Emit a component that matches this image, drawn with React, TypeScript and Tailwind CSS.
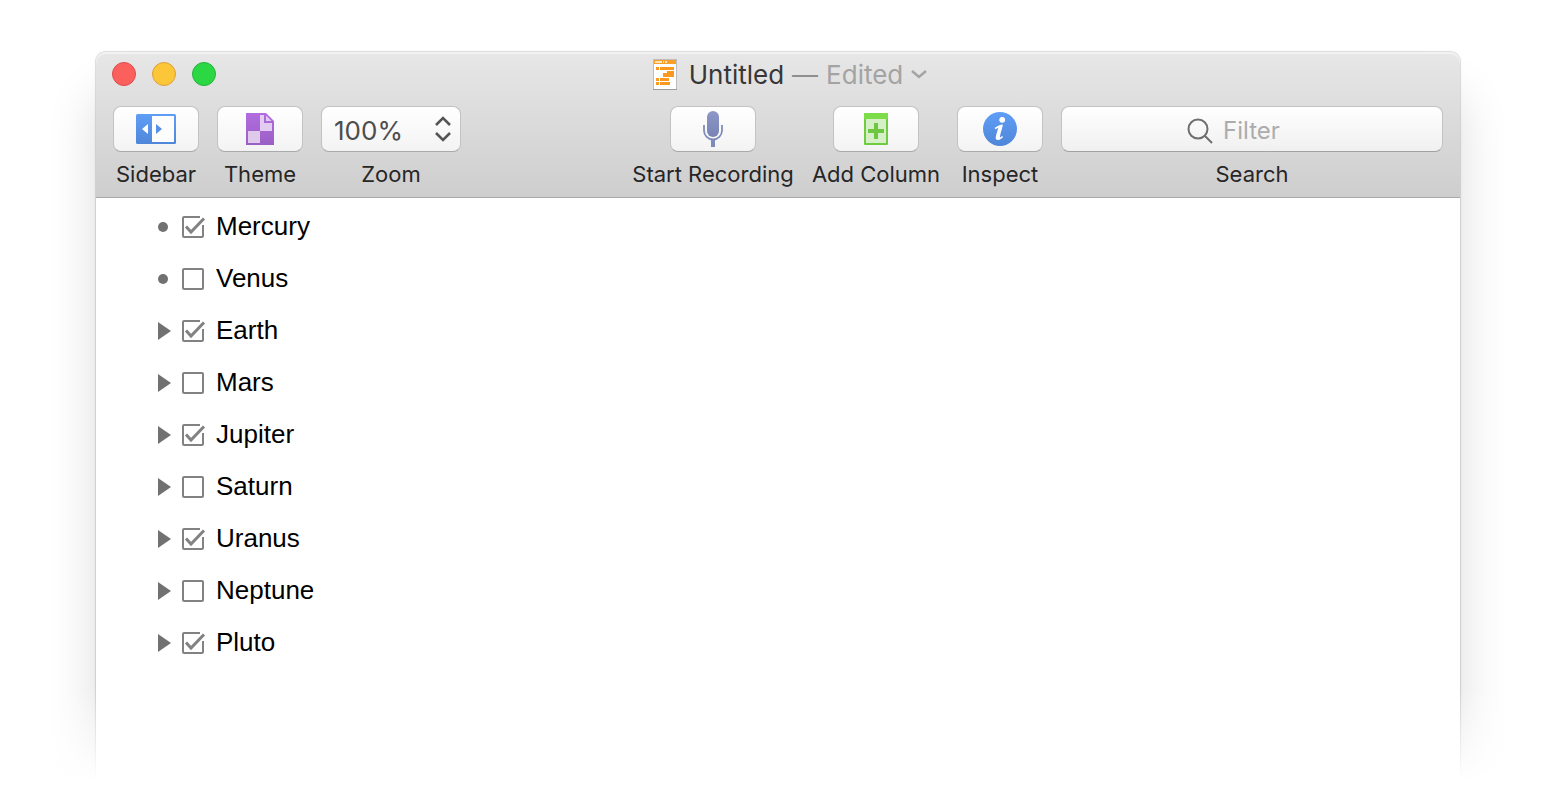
import { useState } from "react";
import type { ReactNode } from "react";

const planets = [
  { name: "Mercury", done: true, leaf: true },
  { name: "Venus", done: false, leaf: true },
  { name: "Earth", done: true, leaf: false },
  { name: "Mars", done: false, leaf: false },
  { name: "Jupiter", done: true, leaf: false },
  { name: "Saturn", done: false, leaf: false },
  { name: "Uranus", done: true, leaf: false },
  { name: "Neptune", done: false, leaf: false },
  { name: "Pluto", done: true, leaf: false },
];

function SidebarIcon() {
  return (
    <svg width="40" height="30" viewBox="0 0 40 30">
      <defs>
        <linearGradient id="blue" x1="0" y1="0" x2="0" y2="1">
          <stop offset="0" stopColor="#5f9ef6" />
          <stop offset="1" stopColor="#4f86d9" />
        </linearGradient>
      </defs>
      <rect width="40" height="30" rx="1.5" fill="url(#blue)" />
      <rect x="16" y="2" width="22" height="26" fill="#fdfdfd" />
      <path d="M12 10v10l-6-5z" fill="#fff" />
      <path d="M20 10v10l6-5z" fill="#5790e6" />
    </svg>
  );
}

function ThemeIcon() {
  return (
    <svg width="28" height="32" viewBox="0 0 28 32">
      <defs>
        <linearGradient id="purple" x1="0" y1="0" x2="0" y2="1">
          <stop offset="0" stopColor="#b26ce0" />
          <stop offset="1" stopColor="#9a5fc4" />
        </linearGradient>
      </defs>
      <path d="M0 0h20l8 8v24H0z" fill="url(#purple)" />
      <path d="M14 2h4v8h8v8H14z" fill="#e2cdf0" />
      <path d="M20 2.500l5.500 5.500H20z" fill="#e2cdf0" />
      <path d="M2 18h12v12H2z" fill="#dfcaec" />
    </svg>
  );
}

function MicIcon() {
  return (
    <svg width="20" height="36" viewBox="0 0 20 36">
      <defs>
        <linearGradient id="mic" x1="0" y1="0" x2="0" y2="1">
          <stop offset="0" stopColor="#8d98c8" />
          <stop offset="1" stopColor="#7983b3" />
        </linearGradient>
      </defs>
      <rect x="4" y="0" width="12" height="26" rx="6" fill="url(#mic)" />
      <path
        d="M1 14v5.500a9 9 0 0 0 18 0V14"
        fill="none"
        stroke="#7f8aba"
        strokeWidth="1.800"
      />
      <path d="M8 28.500h4V36H8z" fill="#7f8aba" />
    </svg>
  );
}

function ColumnIcon() {
  return (
    <svg width="24" height="32" viewBox="0 0 24 32">
      <rect width="24" height="32" rx="1" fill="#6fcb3f" />
      <path d="M1 0h22l1 1v5H0V1z" fill="#7cdd48" />
      <rect x="2" y="6" width="20" height="24" fill="#d5efc6" />
      <path d="M10 10h4v6h6v4h-6v6h-4v-6H4v-4h6z" fill="#6fc741" />
    </svg>
  );
}

function InfoIcon() {
  return (
    <svg width="34" height="34" viewBox="0 0 34 34">
      <circle cx="17" cy="17" r="17" fill="url(#blue)" />
      <circle cx="19.200" cy="7.800" r="2.900" fill="#fff" />
      <path
        d="M12 16.500c2.500-1.200 4.500-2.600 6.200-2.900-.6 3.900-2.600 8.600-2.900 12.300 0 1.800 2.200 1 4.200-1.400"
        fill="none"
        stroke="#fff"
        strokeWidth="1.600"
      />
      <path
        d="M19.900 12.600c-.7 4.300-2.600 8.600-3 12.600 0 1.500-.6 2.700-2.200 2.700-1.700 0-2.200-1.300-1.900-3.200.6-3.400 2.100-6.400 2.600-9.900z"
        fill="#fff"
      />
    </svg>
  );
}

function DocumentIcon() {
  return (
    <svg width="24" height="31" viewBox="0 0 24 31">
      <rect x="0.500" y="0.500" width="23" height="30" fill="#fff" stroke="#bdbdbd" />
      <path d="M0 30.500h24" stroke="#9c9c9c" />
      <path d="M1 1h22v4H1z" fill="#f9a02b" />
      <path d="M2 3h7M10 3h1M12 3h2" stroke="#fde3bd" strokeWidth="2" />
      <g fill="#fb9820">
        <path d="M3 8h3v3H3zM7 8h14v3H7z" />
        <path d="M14 12h7v6H10v-4h4z" />
        <path d="M3 19h3v3H3zM7 19h9v3H7z" />
        <path d="M3 23h3v3H3zM7 23h10v3H7z" />
      </g>
    </svg>
  );
}

function ToolbarButton({
  label,
  width,
  children,
}: {
  label: string;
  width: string;
  children: ReactNode;
}) {
  return (
    <button className={`flex shrink-0 flex-col items-center gap-2 ${width}`}>
      <span className="flex h-[46px] w-[86px] items-center justify-center rounded-lg border border-[#c3c3c3] border-b-[#a9a9a9] bg-linear-to-b from-white to-[#f3f3f3]">
        {children}
      </span>
      <span className="text-[22px] leading-7 whitespace-nowrap">{label}</span>
    </button>
  );
}

function OutlineRow({
  name,
  done,
  leaf,
}: {
  name: string;
  done: boolean;
  leaf: boolean;
}) {
  const [checked, setChecked] = useState(done);

  return (
    <li className="flex h-[52px] items-center">
      {leaf ? (
        <span className="w-6">
          <span className="block size-[10px] rounded-full bg-[#717171]" />
        </span>
      ) : (
        <button aria-label={`Expand ${name}`} className="w-6">
          <svg width="14" height="18" viewBox="0 0 14 18">
            <path d="M0 0l13 9-13 9z" fill="#717171" />
          </svg>
        </button>
      )}
      <label className="flex items-center gap-3">
        <span className="grid">
          <input
            type="checkbox"
            checked={checked}
            onChange={() => setChecked(!checked)}
            className="col-start-1 row-start-1 size-[22px] appearance-none rounded-xs border-2 border-[#828282] checked:border-transparent"
          />
          {checked && (
            <svg
              className="pointer-events-none col-start-1 row-start-1 overflow-visible"
              width="22"
              height="22"
              viewBox="0 0 22 22"
              fill="none"
              stroke="#828282"
            >
              <path d="M18 1H2a1 1 0 0 0-1 1v18a1 1 0 0 0 1 1h18a1 1 0 0 0 1-1V9" strokeWidth="2" />
              <path d="M4 10.500l5 5.500L22 2.500" strokeWidth="3" />
            </svg>
          )}
        </span>
        <span className="pb-0.5">{name}</span>
      </label>
    </li>
  );
}

export default function App() {
  return (
    <div className="relative flex min-h-screen flex-col overflow-hidden bg-white px-24 pt-[52px] font-['Inter',sans-serif]">
      <main className="flex flex-1 flex-col rounded-t-[10px] bg-white shadow-[0_0_1px_1px_rgba(0,0,0,0.14),0_44px_50px_rgba(0,0,0,0.14)]">
        <header className="rounded-t-[10px] border-b border-[#a8a8a8] bg-linear-to-b from-[#e8e7e8] to-[#cfcecf] pb-[9px] text-[#262626]">
          {/* Title bar */}
          <div className="grid h-11 grid-cols-[1fr_auto_1fr] items-center rounded-t-[10px] inset-shadow-[0_2px_0_#f2f2f2]">
            <div className="flex gap-4 pl-4">
              <button aria-label="Close" className="size-6 rounded-full border border-[#e0484a] bg-[#fc605c]" />
              <button aria-label="Minimize" className="size-6 rounded-full border border-[#dea03a] bg-[#fbc637]" />
              <button aria-label="Full screen" className="size-6 rounded-full border border-[#25b13a] bg-[#2bd843]" />
            </div>
            <div className="flex items-center">
              <DocumentIcon />
              <h1 className="ml-3 flex gap-2 pt-0.5 text-[26px] leading-8 text-[#373737]">
                Untitled <span className="text-[#8e8e8e]">—</span>
                <span className="text-[#a3a3a3]">Edited</span>
              </h1>
            </div>
            <button aria-label="Document options" className="ml-2 w-4">
              <svg width="16" height="10" viewBox="0 0 16 10" fill="none" stroke="#a3a3a3" strokeWidth="2.400">
                <path d="M1 2l7 6 7-6" />
              </svg>
            </button>
          </div>

          {/* Toolbar */}
          <div className="flex gap-[18px] px-[17px] pt-[10px]">
            <ToolbarButton label="Sidebar" width="w-[86px]">
              <SidebarIcon />
            </ToolbarButton>
            <ToolbarButton label="Theme" width="w-[86px]">
              <ThemeIcon />
            </ToolbarButton>

            <div className="mr-auto flex w-[140px] shrink-0 flex-col items-center gap-2">
              <div className="grid w-full items-center">
                <select
                  id="zoom"
                  defaultValue="100%"
                  className="col-start-1 row-start-1 h-[46px] w-full appearance-none rounded-lg border border-[#c3c3c3] border-b-[#a9a9a9] bg-linear-to-b from-white to-[#f3f3f3] pt-0.5 pl-3 text-[26px] text-[#4d4d4d]"
                >
                  <option>50%</option>
                  <option>100%</option>
                  <option>200%</option>
                </select>
                <svg
                  className="pointer-events-none col-start-1 row-start-1 mr-[10px] justify-self-end"
                  width="16"
                  height="26"
                  viewBox="0 0 16 26"
                  fill="none"
                  stroke="#555"
                  strokeWidth="2.600"
                >
                  <path d="M1 9l7-7 7 7M1 17l7 7 7-7" />
                </svg>
              </div>
              <label htmlFor="zoom" className="text-[22px] leading-7">
                Zoom
              </label>
            </div>

            <ToolbarButton label="Start Recording" width="w-[164px]">
              <MicIcon />
            </ToolbarButton>
            <ToolbarButton label="Add Column" width="w-[126px]">
              <ColumnIcon />
            </ToolbarButton>
            <ToolbarButton label="Inspect" width="w-[86px]">
              <InfoIcon />
            </ToolbarButton>

            <div className="flex w-[382px] flex-col items-center gap-2">
              <div className="flex h-[46px] w-full items-center justify-center gap-[10px] rounded-lg border border-[#c3c3c3] border-b-[#a0a3a0] bg-linear-to-b from-white to-[#f0f0f0] pt-1">
                <svg width="26" height="26" viewBox="0 0 26 26" fill="none" stroke="#6e6e6e" strokeWidth="2">
                  <circle cx="11" cy="11" r="9.500" />
                  <path d="M17.500 17.500l7.500 7.500" />
                </svg>
                <input
                  id="search"
                  type="text"
                  placeholder="Filter"
                  className="w-[94px] bg-transparent text-[24px] outline-none placeholder:text-[#acacac]"
                />
              </div>
              <label htmlFor="search" className="text-[22px] leading-7">
                Search
              </label>
            </div>
          </div>
        </header>

        <ul className="pt-[3px] pl-[62px] font-['Liberation_Sans',Arial,sans-serif] text-[26px] leading-8 text-black">
          {planets.map((planet) => (
            <OutlineRow key={planet.name} {...planet} />
          ))}
        </ul>
      </main>

      {/* Fades the window out at the bottom */}
      <div className="pointer-events-none absolute inset-x-0 bottom-0 h-[110px] bg-linear-to-b from-transparent to-white to-85%" />
    </div>
  );
}
